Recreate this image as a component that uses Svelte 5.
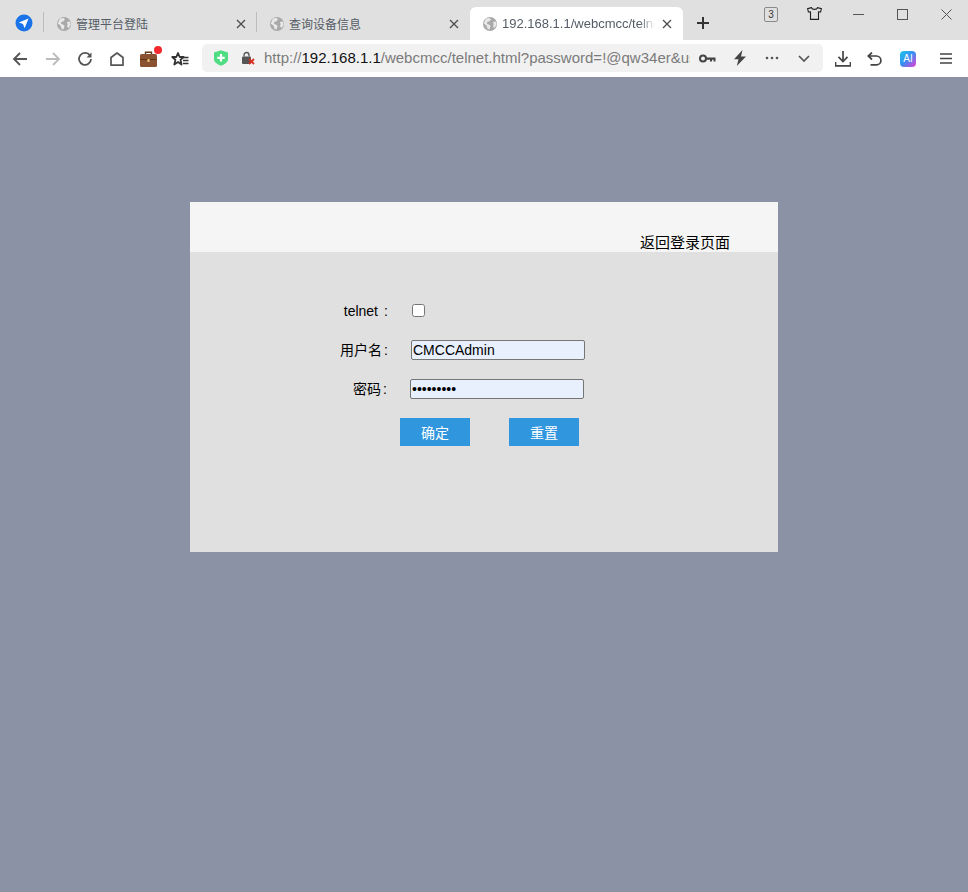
<script>
  const tabs = [
    { title: '管理平台登陆', active: false },
    { title: '查询设备信息', active: false },
    { title: '192.168.1.1/webcmcc/telnet.html', active: true }
  ];
  let telnet = $state(false);
  let user = $state('CMCCAdmin');
  let pass = $state('!@qw34er&');
</script>

{#snippet globe()}
  <svg class="globe" viewBox="0 0 14 14" width="14" height="14">
    <circle cx="7" cy="7" r="7" fill="#a9a9a9" />
    <path d="M3 1.600 6.600 1 8 2.600 6.200 4.600 4.400 4.800 4 7 6 7.400 7.600 9 6.400 12.600 4.600 12 3.600 8.800 .8 6.600Z" fill="#e8e8e8" />
    <path d="M10 5 13 4.600 13.600 8 11.400 11 10 9.600 10.600 7.400Z" fill="#e8e8e8" />
  </svg>
{/snippet}

{#snippet closeX()}
  <svg class="close" viewBox="0 0 10 10" width="10" height="10">
    <path d="M1 1 9 9M9 1 1 9" stroke="#4d4d4d" stroke-width="1.300" fill="none" />
  </svg>
{/snippet}

<div class="browser">
  <div class="tabbar">
    <div class="pin">
      <svg viewBox="0 0 18 18" width="18" height="18">
        <circle cx="9" cy="9" r="8.500" fill="#1a73e8" />
        <path d="M13.600 4.400 3.800 8.400 8 9.900 9.600 14.200Z" fill="#fff" />
      </svg>
    </div>
    <div class="tabs">
      {#each tabs as t}
        <div class="tab" class:active={t.active}>
          {@render globe()}
          <span class="title">{t.title}</span>
          {@render closeX()}
        </div>
      {/each}
      <svg class="plus" viewBox="0 0 14 14" width="14" height="14">
        <path d="M7 1V13M1 7H13" stroke="#333" stroke-width="2" fill="none" />
      </svg>
    </div>
    <div class="winctl">
      <span class="count">3</span>
      <svg class="shirt" viewBox="0 0 15 13" width="15" height="13">
        <path d="M4.500 .6 .6 1.600 1.400 5 3.500 4.800V12.400H11.500V4.800L13.600 5 14.400 1.600 10.500 .6C10 3 5 3 4.500 .6Z" fill="none" stroke="#222" stroke-width="1.100" />
      </svg>
      <svg class="min" viewBox="0 0 11 11" width="11" height="11"><path d="M0 5.500H11" stroke="#555" /></svg>
      <svg class="max" viewBox="0 0 11 11" width="11" height="11"><rect x=".5" y=".5" width="10" height="10" fill="none" stroke="#555" /></svg>
      <svg class="cls" viewBox="0 0 11 11" width="11" height="11"><path d="M.5 .5 10.500 10.500M10.500 .5 .5 10.500" stroke="#555" /></svg>
    </div>
  </div>

  <div class="toolbar">
    <div class="navs">
      <svg viewBox="0 0 16 16" width="16" height="16"><path d="M15 8H2M8 2 2 8 8 14" fill="none" stroke="#555" stroke-width="1.800" /></svg>
      <svg viewBox="0 0 16 16" width="16" height="16"><path d="M1 8H14M8 2 14 8 8 14" fill="none" stroke="#bbb" stroke-width="1.800" /></svg>
      <svg viewBox="0 0 16 16" width="16" height="16"><path d="M13 4.600A6 6 0 1 0 14 8" fill="none" stroke="#555" stroke-width="1.800" /><path d="M14.500 1.500V6.500H9.500Z" fill="#555" /></svg>
      <svg viewBox="0 0 16 16" width="16" height="16"><path d="M2 14.200V6.500L8 2 14 6.500V14.200Z" fill="none" stroke="#555" stroke-width="1.700" stroke-linejoin="round" /></svg>
      <div class="case">
        <svg viewBox="0 0 17 16" width="17" height="16">
          <path d="M5.500 3V1.200H11.500V3" fill="none" stroke="#5d3a1f" stroke-width="1.400" />
          <rect x="0" y="3" width="17" height="13" rx="1.500" fill="#8a5230" />
          <rect x="0" y="8" width="17" height="1" fill="#5f3518" />
          <rect x="7.500" y="8" width="2" height="3" fill="#f1c27a" />
        </svg>
        <span class="dot"></span>
      </div>
      <svg class="star" viewBox="0 0 18 16" width="18" height="16">
        <path d="M7 2 8.700 6H12.600L9.500 8.800 10.500 13.500 7 11 3.300 13.500 4.400 8.800 1.200 6H5.300Z" fill="#fff" stroke="#333" stroke-width="1.800" stroke-linejoin="round" />
        <path d="M11.500 6.500H17.500M12 9.500H17.500M12 12.500H17.500" stroke="#333" stroke-width="1.400" />
      </svg>
    </div>
    <div class="addr">
      <svg class="shield" viewBox="0 0 14 16" width="14" height="16">
        <path d="M0 2.500 7 .3 14 2.500V9.500C14 12.500 10 14.500 7 15.800 4 14.500 0 12.500 0 9.500Z" fill="#4fdc82" />
        <path d="M7 4V11.500M3.300 7.800H10.700" stroke="#fff" stroke-width="2.200" />
      </svg>
      <svg class="lock" viewBox="0 0 14 14" width="14" height="14">
        <path d="M3 5.500V4A2.500 2.500 0 0 1 8 4V5.500" fill="none" stroke="#555" stroke-width="1.300" />
        <rect x="1" y="5.500" width="9" height="7.500" rx="1" fill="#555" />
        <path d="M8 8 13 13M13 8 8 13" stroke="#d93025" stroke-width="1.800" />
      </svg>
      <div class="url">http://<b>192.168.1.1</b>/webcmcc/telnet.html?password=!@qw34er&amp;username=CMCCAdmin</div>
      <div class="addr-tools">
        <svg viewBox="0 0 17 9" width="17" height="9">
          <circle cx="4" cy="4.500" r="3" fill="none" stroke="#444" stroke-width="2" />
          <path d="M7 3.500H16.500V7.500H14.500V5.800H13V7.500H11V5.800H7Z" fill="#444" />
        </svg>
        <svg viewBox="0 0 12 16" width="12" height="16"><path d="M8.500 0 0 9.200H4.500L2.800 16 12 6.400H7Z" fill="#444" /></svg>
        <svg viewBox="0 0 14 4" width="14" height="4"><circle cx="2" cy="2" r="1.300" fill="#555" /><circle cx="7" cy="2" r="1.300" fill="#555" /><circle cx="12" cy="2" r="1.300" fill="#555" /></svg>
        <svg viewBox="0 0 12 7" width="12" height="7"><path d="M1 1 6 6 11 1" fill="none" stroke="#555" stroke-width="1.700" /></svg>
      </div>
    </div>
    <div class="rights">
      <svg viewBox="0 0 16 16" width="16" height="16"><path d="M8 0V10M3.500 5.800 8 10.500 12.500 5.800M.5 11V14.800H15.500V11" fill="none" stroke="#444" stroke-width="1.700" /></svg>
      <svg viewBox="0 0 15 14" width="15" height="14"><path d="M5 .5 1.200 4 5 7.500M1.500 4H9.500A4.300 4.300 0 0 1 9.500 12.800H3.500" fill="none" stroke="#444" stroke-width="1.700" /></svg>
      <span class="ai">AI</span>
      <svg viewBox="0 0 12 11" width="12" height="11"><path d="M0 1H12M0 5.500H12M0 10H12" stroke="#444" stroke-width="1.600" /></svg>
    </div>
  </div>

  <main class="page">
    <section class="panel">
      <header class="head"><a href="#back">返回登录页面</a></header>
      <form class="form" onsubmit={(e) => e.preventDefault()}>
        <div class="row">
          <label for="t"><span class="gap">telnet</span><span class="colon">:</span></label>
          <input id="t" type="checkbox" bind:checked={telnet} />
        </div>
        <div class="row cjk">
          <label for="u">用户名<span class="colon">:</span></label>
          <input id="u" class="field" type="text" bind:value={user} />
        </div>
        <div class="row cjk pw">
          <label for="p">密码<span class="colon">:</span></label>
          <input id="p" class="field" type="password" bind:value={pass} />
        </div>
        <div class="btns">
          <button type="submit">确定</button>
          <button type="reset">重置</button>
        </div>
      </form>
    </section>
  </main>
</div>

<style>
  :global(body) { margin: 0; }
  .browser {
    width: 968px;
    height: 892px;
    display: flex;
    flex-direction: column;
    overflow: hidden;
    font-family: "Liberation Sans", "Noto Sans CJK SC", sans-serif;
  }
  svg { display: block; flex: none; }

  .tabbar {
    height: 40px;
    background: #e0e0e0;
    display: flex;
    position: relative;
  }
  .pin { width: 44px; padding: 14px 0 0 15px; box-sizing: border-box; }
  .tabs { display: flex; align-items: flex-start; padding-top: 7px; }
  .tab {
    width: 213px;
    height: 33px;
    box-sizing: border-box;
    display: flex;
    align-items: center;
    padding: 0 11px 0 13px;
    font-size: 12px;
    color: #555c66;
    position: relative;
  }
  .tab:not(.active)::before {
    content: "";
    position: absolute;
    left: -1px;
    top: 5px;
    height: 20px;
    width: 1px;
    background: #bdbdbd;
  }
  .tab.active {
    background: #fff;
    border-radius: 6px 6px 0 0;
    font-size: 13px;
  }
  .globe { margin-right: 5px; }
  .title {
    flex: 1;
    white-space: nowrap;
    overflow: hidden;
    min-width: 0;
  }
  .tab.active .title {
    -webkit-mask-image: linear-gradient(to right, #000 90%, transparent 100%);
    mask-image: linear-gradient(to right, #000 90%, transparent 100%);
  }
  .close { margin-left: 7px; }
  .plus { margin: 9px 0 0 13px; }

  .winctl { position: absolute; top: 0; left: 0; right: 0; height: 28px; pointer-events: none; }
  .winctl > * { position: absolute; }
  .count {
    left: 764px; top: 7px;
    width: 12px; height: 13px;
    border: 1px solid #8a8a8a;
    border-radius: 2px;
    font-size: 10px;
    line-height: 13px;
    text-align: center;
    color: #333;
  }
  .shirt { left: 807px; top: 7px; }
  .min { left: 853px; top: 9px; }
  .max { left: 897px; top: 9px; }
  .cls { left: 941px; top: 9px; }

  .toolbar {
    height: 37px;
    background: #fff;
    display: flex;
    align-items: flex-start;
    padding-left: 12px;
    box-sizing: border-box;
  }
  .navs { display: flex; align-items: center; gap: 16px; height: 37px; width: 190px; }
  .navs svg:nth-child(2) { margin-left: 1px; }
  .case { position: relative; flex: none; margin-left: -1px; }
  .star { margin-left: -2px; }
  .dot {
    position: absolute;
    left: 14px; top: -5px;
    width: 8px; height: 8px;
    border-radius: 50%;
    background: #f5282d;
  }
  .addr {
    width: 621px;
    height: 28px;
    margin-top: 4px;
    background: #f1f1f1;
    border-radius: 5px;
    display: flex;
    align-items: center;
    padding-left: 12px;
    box-sizing: border-box;
  }
  .lock { margin-left: 13px; }
  .url {
    margin: -2px 0 0 9px;
    width: 426px;
    overflow: hidden;
    white-space: nowrap;
    font-size: 15px;
    color: #7b7b7b;
  }
  .url b { font-weight: 400; color: #111; }
  .addr-tools {
    display: flex;
    align-items: center;
    margin-left: 9px;
    gap: 0;
  }
  .addr-tools svg:nth-child(2) { margin-left: 18px; }
  .addr-tools svg:nth-child(3) { margin-left: 19px; }
  .addr-tools svg:nth-child(4) { margin-left: 19px; }
  .rights { display: flex; align-items: center; height: 37px; margin-left: 12px; }
  .rights svg:nth-child(2) { margin-left: 16px; }
  .ai {
    margin-left: 18px;
    width: 16px; height: 16px;
    border-radius: 4px;
    background: linear-gradient(135deg, #18c8e8 0%, #3a8cf5 50%, #f03bd0 100%);
    color: #fff;
    font-size: 10px;
    line-height: 16px;
    text-align: center;
  }
  .rights svg:nth-child(4) { margin-left: 24px; }

  .page {
    flex: 1;
    background: #8c92a6;
    padding: 125px 0 0 190px;
  }
  .panel { width: 588px; height: 350px; background: #e0e0e0; }
  .head {
    height: 50px;
    background: #f5f5f5;
    display: flex;
    justify-content: flex-end;
    align-items: flex-end;
    padding-right: 48px;
    box-sizing: border-box;
  }
  .head a {
    font-size: 15px;
    line-height: 20px;
    margin-bottom: -1px;
    color: #000;
    text-decoration: none;
  }
  .form { padding-top: 39px; font-size: 14px; color: #000; }
  .row {
    height: 39px;
    display: flex;
    align-items: center;
  }
  .row label {
    width: 198px;
    flex: none;
    text-align: right;
    white-space: nowrap;
  }
  .cjk label { margin-top: -2px; }
  .pw label { width: 197px; }
  .colon { display: inline-block; width: 6px; text-align: right; }
  .gap { margin-right: 4px; }
  .field {
    width: 174px;
    height: 20px;
    margin: 0 0 0 23px;
    padding: 1px;
    box-sizing: border-box;
    border: 1px solid #767676;
    border-radius: 2px;
    background: #e8f0fe;
    font: 14px "Liberation Sans", sans-serif;
    color: #000;
  }
  input[type="checkbox"] {
    width: 13px;
    height: 13px;
    margin: 0 0 0 24px;
  }
  .btns {
    display: flex;
    gap: 39px;
    margin: 10px 0 0 210px;
  }
  .btns button {
    width: 70px;
    height: 28px;
    padding: 0;
    border: 0;
    background: #3096de;
    color: #fff;
    font: 14px "Liberation Sans", "Noto Sans CJK SC", sans-serif;
  }
</style>
